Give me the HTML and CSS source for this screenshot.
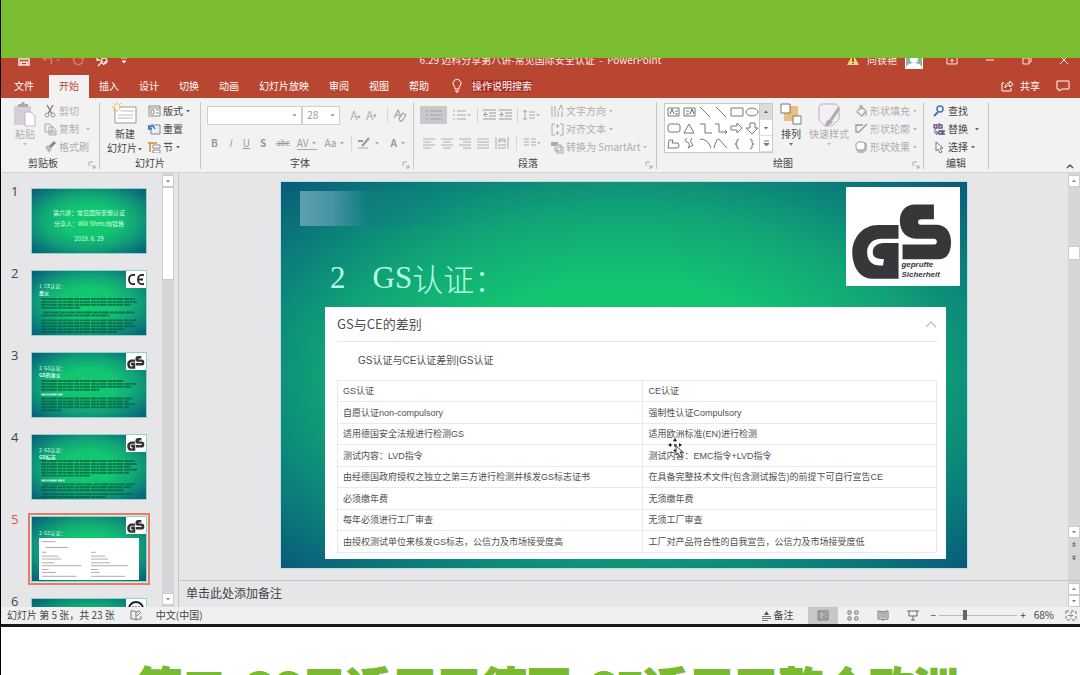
FILE: index.html
```html
<!DOCTYPE html>
<html lang="zh-CN">
<head>
<meta charset="utf-8">
<title>PowerPoint</title>
<link rel="stylesheet" href="styles.css">
</head>
<body>
<svg class="defs" aria-hidden="true">
  <symbol id="gs" viewBox="0 0 345 297">
    <g transform="translate(-317 -34)">
      <path d="M476 148H415C365 148 336 190 336 230C336 275 360 310 395 310H476V202H432C410 202 398 214 398 230C398 244 408 251 432 251L429 270H420C395 270 381 255 381 230C381 205 398 189 425 189H476Z"/>
      <path d="M583 86H525C498 86 480 105 480 135C480 168 500 189 528 189H582C590 189 592 194 592 198C592 203 590 207 584 207H488V251H600C622 251 635 232 635 200C635 168 618 147 590 147H545C538 147 535 143 535 139C535 133 538 130 546 130H583Z"/>
    </g>
  </symbol>
  <symbol id="down" viewBox="0 0 6 6"><path d="M1 2h4L3 4.500z"/></symbol>
  <symbol id="up" viewBox="0 0 6 6"><path d="M1 4h4L3 1.500z"/></symbol>
  <symbol id="launch" viewBox="0 0 8 8"><path d="M1 5V1h4M4 4l3 3M7 4v3H4" fill="none" stroke="currentColor"/></symbol>
  <symbol id="lines" viewBox="0 0 12 12"><path d="M0 2h12M0 5h8M0 8h12M0 11h8" fill="none" stroke="currentColor"/></symbol>
  <symbol id="linesc" viewBox="0 0 12 12"><path d="M0 2h12M2 5h8M0 8h12M2 11h8" fill="none" stroke="currentColor"/></symbol>
  <symbol id="linesr" viewBox="0 0 12 12"><path d="M0 2h12M4 5h8M0 8h12M4 11h8" fill="none" stroke="currentColor"/></symbol>
  <symbol id="linesj" viewBox="0 0 12 12"><path d="M0 2h12M0 5h12M0 8h12M0 11h12" fill="none" stroke="currentColor"/></symbol>
</svg>

<div class="page">
<div class="band"></div>
<div class="app">
  <header class="titlebar">
    <div class="quick">
      <svg width="12" height="12" viewBox="0 0 12 12"><path d="M1 1h10v10H1zM3 1v4h6V1M3 11V8h6v3" fill="none" stroke="currentColor" stroke-width="1.500"/></svg>
      <svg class="faded" width="20" height="12" viewBox="0 0 20 12"><path d="M5 1L2 4l3 3M2 4h6q4 1 2 6" fill="none" stroke="currentColor" stroke-width="1.500"/><path d="M15 5h4l-2 2z" fill="currentColor"/></svg>
      <svg class="faded" width="12" height="12" viewBox="0 0 12 12"><path d="M8 2a4.500 4.500 0 1 1-5 1M8 0v4h4" fill="none" stroke="currentColor" stroke-width="1.500"/></svg>
      <svg width="14" height="14" viewBox="0 0 14 14"><path d="M1 2h9v4M2 2v5h3M9 5a3 3 0 1 0 .1 0M8 8l-5 5M11 8l-3 4" fill="none" stroke="currentColor" stroke-width="1.300"/></svg>
      <svg width="8" height="10" viewBox="0 0 8 10"><path d="M1 3h6M2 6h4l-2 2z" fill="currentColor" stroke="currentColor"/></svg>
    </div>
    <div class="doc">6.29 迈科分享第八讲-常见国际安全认证 &nbsp;-&nbsp; PowerPoint</div>
    <div class="window">
      <svg width="12" height="12" viewBox="0 0 12 12"><path d="M6 0l6 11H0z" fill="#f6d27a"/><path d="M6 4v4M6 9v1" stroke="#79341e" stroke-width="1.500"/></svg>
      <span class="user">向镁艳</span>
      <svg class="avatar" width="18" height="18" viewBox="0 0 18 18"><path d="M0 0h18v18H0z" fill="#8eb59b"/><path d="M2 18V1h14v17z" fill="#8eb59b"/><circle cx="9" cy="8" r="4" fill="#fff"/><path d="M1 18q0-6 8-6t8 6z" fill="#fff"/><path d="M.5.500h17v17H.500z" fill="none" stroke="#fff"/></svg>
      <svg width="12" height="12" viewBox="0 0 12 12"><path d="M1 1h10v9H1zM1 3h10M6 9V5M4 7l2-2 2 2" fill="none" stroke="currentColor"/></svg>
      <svg width="10" height="12" viewBox="0 0 10 12"><path d="M1 6h8" stroke="currentColor"/></svg>
      <svg width="10" height="12" viewBox="0 0 10 12"><path d="M1 4h6v6H1zM3 4V2h6v6H7" fill="none" stroke="currentColor"/></svg>
      <svg width="10" height="12" viewBox="0 0 10 12"><path d="M1 2l8 8M9 2l-8 8" stroke="currentColor"/></svg>
    </div>
  </header>

  <nav class="tabs">
    <button class="tab file">文件</button><button class="tab active">开始</button><button class="tab">插入</button><button class="tab">设计</button><button class="tab">切换</button><button class="tab">动画</button><button class="tab">幻灯片放映</button><button class="tab">审阅</button><button class="tab">视图</button><button class="tab">帮助</button>
    <svg class="bulb" width="12" height="14" viewBox="0 0 12 14"><path d="M4 10Q4 8 3 7a4 4 0 1 1 6 0Q8 8 8 10zM4 12h4M5 13h2" fill="none" stroke="currentColor"/></svg>
    <button class="tellme">操作说明搜索</button>
    <span class="grow"></span>
    <button class="share"><svg width="13" height="12" viewBox="0 0 13 12"><path d="M3 3H1v8h9V8M4 8q0-5 5-5V1l3 3.500L9 7V5Q6 5 4 8z" fill="none" stroke="currentColor"/></svg>共享</button>
    <button class="comment" aria-label="批注"><svg width="14" height="12" viewBox="0 0 14 12"><path d="M1 1h12v8H6l-3 2V9H1z" fill="none" stroke="currentColor"/></svg></button>
  </nav>

  <section class="ribbon">
    <div class="group clipboard">
      <div class="tools off">
        <button class="big"><svg width="24" height="26" viewBox="0 0 24 26"><path d="M1 4h17v19H1z" fill="#d5ced8"/><path d="M5 5V2h3l1-2h2l1 2h3v3z" fill="#aaa"/><path d="M12 10h6l4 4v10H12z" fill="#fff" stroke="#bbb"/></svg>粘贴<svg class="caret"><use href="#down"/></svg></button>
        <div class="stack">
          <button><svg width="13" height="13" viewBox="0 0 13 13"><path d="M3 0l5 9M9 0L4 9" stroke="#888" stroke-width="1.500"/><circle cx="3" cy="10" r="2" fill="none" stroke="#999"/><circle cx="9" cy="10" r="2" fill="none" stroke="#999"/></svg>剪切</button>
          <button><svg width="13" height="13" viewBox="0 0 13 13"><path d="M1 1h5l2 2v6H1zM5 4h4l3 3v5H5zM6 8h5M6 10h5" fill="#eee" stroke="#aaa"/></svg>复制<svg class="caret far"><use href="#down"/></svg></button>
          <button><svg width="13" height="13" viewBox="0 0 13 13"><path d="M1 6l3-2 4 4-3 4z" fill="#bbb"/><path d="M6 6l5-5" stroke="#888" stroke-width="3"/></svg>格式刷</button>
        </div>
      </div>
      <div class="name">剪贴板<svg class="launch"><use href="#launch"/></svg></div>
    </div>
    <div class="group slides">
      <div class="tools">
        <button class="big"><svg width="26" height="26" viewBox="0 0 26 26"><path d="M3 5h21v16H3z" fill="#fff" stroke="#999"/><path d="M10 9h12M6 13h15M6 16h15" stroke="#bbb"/><path d="M5 0v10M0 5h10M1 1l8 8M9 1l-8 8" stroke="#e8b85c"/><circle cx="5" cy="5" r="2" fill="#fff"/></svg>新建<span>幻灯片<svg class="caret"><use href="#down"/></svg></span></button>
        <div class="stack">
          <button><svg width="13" height="12" viewBox="0 0 13 12"><path d="M1 1h11v10H1zM1 3h11M3 5h3v4H3zM8 5h3M8 8h3" fill="#fff" stroke="#888"/></svg>版式<svg class="caret"><use href="#down"/></svg></button>
          <button><svg width="13" height="12" viewBox="0 0 13 12"><path d="M3 2h9v9H3z" fill="#e8eef5" stroke="#888"/><path d="M1 2l-1 4h4M1 5q3-5 6 1" fill="none" stroke="#2d74bb" stroke-width="1.300"/></svg>重置</button>
          <button><svg width="13" height="12" viewBox="0 0 13 12"><path d="M5 4h7v3H5zM5 9h7v3H5z" fill="#fff" stroke="#888"/><path d="M0 2h9M2 2v9" stroke="#dfa454" stroke-width="2"/></svg>节<svg class="caret"><use href="#down"/></svg></button>
        </div>
      </div>
      <div class="name">幻灯片</div>
    </div>
    <div class="group font">
      <div class="tools rows off">
        <div class="line">
          <select class="box face" aria-label="字体"><option></option></select><select class="box size" aria-label="字号"><option>28</option></select>
          <button class="grow-a">A<sup>▴</sup></button><button class="shrink-a">A<sup>▾</sup></button><i class="rule"></i>
          <button aria-label="清除格式"><svg width="14" height="13" viewBox="0 0 14 13"><path d="M1 9l4-8 3 7M2 6h4M6 9l4-5 3 2-4 6H7z" fill="none" stroke="#aaa" stroke-width="1.300"/></svg></button>
        </div>
        <div class="line letters">
          <button><b>B</b></button><button><em>I</em></button><button><u>U</u></button><button><b>S</b></button><button class="tiny"><s>abc</s></button><button class="av">AV<svg class="caret"><use href="#down"/></svg></button><button>Aa<svg class="caret"><use href="#down"/></svg></button><i class="rule"></i><button aria-label="突出显示"><svg width="14" height="13" viewBox="0 0 14 13"><path d="M1 4h5M5 9l7-8" stroke="#999" stroke-width="2"/><path d="M1 11h10" stroke="#ccc" stroke-width="2"/></svg><svg class="caret"><use href="#down"/></svg></button><button><b>A</b><svg class="caret"><use href="#down"/></svg></button>
        </div>
      </div>
      <div class="name">字体<svg class="launch"><use href="#launch"/></svg></div>
    </div>
    <div class="group para">
      <div class="tools off">
        <div class="rows">
          <div class="line">
            <button class="pressed" aria-label="项目符号"><svg width="18" height="12" viewBox="0 0 18 12"><path d="M1 2h2M5 2h12M1 6h2M5 6h12M1 10h2M5 10h12" stroke="#a2a2a6"/></svg></button>
            <button aria-label="编号"><svg width="13" height="13" viewBox="0 0 13 13"><path d="M0 2h2M4 2h9M0 6h2M4 6h9M0 10h2M4 10h9" stroke="#aaa"/></svg><svg class="caret"><use href="#down"/></svg></button><i class="rule"></i>
            <button aria-label="减少缩进"><svg width="13" height="12" viewBox="0 0 13 12"><path d="M0 1h13M6 4h7M6 7h7M0 10h13M5 5.500H1M3 3L1 5.500 3 8" fill="none" stroke="#999"/></svg></button>
            <button aria-label="增加缩进"><svg width="13" height="12" viewBox="0 0 13 12"><path d="M0 1h13M6 4h7M6 7h7M0 10h13M0 5.500h4M2 3l2 2.500L2 8" fill="none" stroke="#999"/></svg></button><i class="rule"></i>
            <button aria-label="行距"><svg width="12" height="12" viewBox="0 0 12 12"><path d="M2 1v10M0 3l2-2 2 2M0 9l2 2 2-2M6 3h6M6 6h6M6 9h6" fill="none" stroke="#aaa"/></svg><svg class="caret"><use href="#down"/></svg></button>
          </div>
          <div class="line aligns">
            <button aria-label="左对齐"><svg width="12" height="12"><use href="#lines"/></svg></button><button aria-label="居中"><svg width="12" height="12"><use href="#linesc"/></svg></button><button aria-label="右对齐"><svg width="12" height="12"><use href="#linesr"/></svg></button><button aria-label="两端对齐"><svg width="12" height="12"><use href="#linesj"/></svg></button><button aria-label="分散对齐"><svg width="14" height="13" viewBox="0 0 14 13"><path d="M1 0v12M13 0v12M3 8h8M3 11h8M4 6V2h6v4M4 4h6" fill="none" stroke="#aaa"/></svg></button><i class="rule"></i><button aria-label="分栏"><svg width="12" height="12" viewBox="0 0 12 12"><path d="M0 2h5M7 2h5M0 5h5M7 5h5M0 8h5M7 8h5" stroke="#aaa"/></svg><svg class="caret"><use href="#down"/></svg></button>
          </div>
        </div>
        <div class="stack">
          <button><svg width="13" height="13" viewBox="0 0 13 13"><path d="M1 1v11M4 1v11M7 6v6M8 5l2-5 2 5M11 6v6" fill="none" stroke="#aaa"/></svg>文字方向<svg class="caret"><use href="#down"/></svg></button>
          <button><svg width="13" height="13" viewBox="0 0 13 13"><path d="M4 1H1v11h3M9 1h3v11H9M6.500 2v3M5 3.500l1.500-2 1.500 2M6.500 8v3M5 9.500l1.500 2 1.500-2" fill="none" stroke="#aaa"/></svg>对齐文本<svg class="caret"><use href="#down"/></svg></button>
          <button><svg width="13" height="13" viewBox="0 0 13 13"><path d="M0 1h7v4H0z" fill="#aaa"/><path d="M4 4h6v6H4zM6 6h6v6H6z" fill="#eee" stroke="#aaa"/></svg>转换为 SmartArt<svg class="caret"><use href="#down"/></svg></button>
        </div>
      </div>
      <div class="name">段落<svg class="launch"><use href="#launch"/></svg></div>
    </div>
    <div class="group draw">
      <div class="tools">
        <div class="gallery">
          <svg width="94" height="48" viewBox="0 0 94 48" fill="none" stroke="#777">
            <path d="M3 4h11v8H3zM19 4h11v8H19z"/><path d="M5 10l2-5 2 5M25 10l2-5 2 5" stroke="#456a94"/><path d="M10 7h3M10 10h3M21 7h3M21 10h3M35 3l10 10M51 3l10 10M66 4h12v8H66z"/><ellipse cx="87" cy="8" rx="6" ry="4"/>
            <rect x="3" y="20" width="12" height="8" rx="2"/><path d="M19 29l5-9 5 9zM35 20h5v9h7M50 20h4v8h8M60 26l2 2-2 2M66 22h6v-3l5 5-5 5v-3h-6zM85 19h5v5h3l-6 6-6-6h4z"/>
            <path d="M4 36h4l-1 3h6q3 5-2 5H3zM22 34q-4 3 0 4t1 6l5-3q-4-4-1-7M35 35q8 0 11 9M49 44q3-12 6-8t7 8M74 35q-3 0-2 4l-2 1 2 1q-1 4 2 4M85 35q3 0 2 4l2 1-2 1q1 4-2 4"/>
          </svg>
          <div class="steps"><button aria-label="上一行"><svg class="caret"><use href="#up"/></svg></button><button aria-label="下一行"><svg class="caret"><use href="#down"/></svg></button><button aria-label="更多形状"><svg width="7" height="8" viewBox="0 0 7 8"><path d="M1 1h5M1 3.500h5L3.500 6z" stroke="#777" fill="#777"/></svg></button></div>
        </div>
        <button class="big"><svg width="24" height="26" viewBox="0 0 24 26"><path d="M5 4h14v15H5z" fill="#e8bd80"/><path d="M2 2h9v9H2zM14 14h8v8h-8z" fill="#fff" stroke="#777"/></svg>排列<svg class="caret"><use href="#down"/></svg></button>
        <button class="big off"><svg width="24" height="26" viewBox="0 0 24 26"><path d="M4 2h15l3 3v12l-7 7H8l-6-6V5z" fill="#f4eff6" stroke="#b9b0bb"/><path d="M22 6l-8 12" stroke="#aaa" stroke-width="3"/><path d="M8 24q0-5 5-7l3 3q-3 4-8 4z" fill="#b4a8b8"/></svg>快速样式<svg class="caret"><use href="#down"/></svg></button>
        <div class="stack off">
          <button><svg width="13" height="13" viewBox="0 0 13 13"><path d="M3 5l4-3 4 4-4 5-5-4zM5 5V1h2v3M11 6v5" fill="none" stroke="#aaa" stroke-width="1.300"/></svg>形状填充<svg class="caret"><use href="#down"/></svg></button>
          <button><svg width="13" height="13" viewBox="0 0 13 13"><path d="M8 2H1v7h3M4 9l8-8" fill="none" stroke="#999" stroke-width="1.300"/></svg>形状轮廓<svg class="caret"><use href="#down"/></svg></button>
          <button><svg width="13" height="13" viewBox="0 0 13 13"><path d="M3 1h7l2 2v6l-3 3H3L1 9z" fill="#bbb"/><path d="M3 1h5l2 2v4L8 9H3L1 7V3z" fill="#fff" stroke="#999"/></svg>形状效果<svg class="caret"><use href="#down"/></svg></button>
        </div>
      </div>
      <div class="name">绘图<svg class="launch"><use href="#launch"/></svg></div>
    </div>
    <div class="group edit">
      <div class="tools">
        <div class="stack">
          <button><svg width="13" height="13" viewBox="0 0 13 13"><circle cx="7" cy="4" r="3" fill="none" stroke="#4077b5" stroke-width="1.500"/><path d="M5 7l-4 4" stroke="#4077b5" stroke-width="2"/></svg>查找</button>
          <button><svg width="13" height="13" viewBox="0 0 13 13"><path d="M1 5V2h3v3H1M6 0v5h3V2H6M6 8h3v3H6zM12 8h-2v3h2" fill="none" stroke="#5d5270" stroke-width="1.300"/><path d="M2 6v4h3M3 8l2 2-2 2" fill="none" stroke="#3a73b5"/></svg>替换<svg class="caret far"><use href="#down"/></svg></button>
          <button><svg width="13" height="13" viewBox="0 0 13 13"><path d="M3 1v9l2-2 2 4 2-1-2-4h3z" fill="#fff" stroke="#777"/></svg>选择<svg class="caret"><use href="#down"/></svg></button>
        </div>
      </div>
      <div class="name">编辑</div>
    </div>
    <button class="fold" aria-label="折叠功能区"><svg width="8" height="6" viewBox="0 0 8 6"><path d="M1 5l3-3 3 3" fill="none" stroke="#555" stroke-width="1.500"/></svg></button>
  </section>

  <main class="work">
    <aside class="pane">
      <ol class="thumbs">
        <li><span>1</span><div class="thumb cover"><p>第六讲：常见国际安规认证</p><p>分享人：Will Shen/向镁艳</p><p class="date">2019. 6. 29</p></div></li>
        <li><span>2</span><div class="thumb"><p>1 &nbsp;CE认证：</p><p class="sub">意义</p>
          <svg class="copy" viewBox="0 0 98 40"><path d="M0 3h96M0 6h98M0 9h92M0 12h40M2 17h94M0 20h70M0 25h98M0 28h94M0 31h96M0 34h86M0 37h78"/></svg>
          <svg class="badge" viewBox="0 0 20 15"><path d="M0 0h20v15H0z" fill="#fff"/><path d="M9 3Q3 2 3 7.500T9 12M18 3q-6-1-6 4.500T18 12M13 7.500h4" fill="none" stroke="#222" stroke-width="1.800"/></svg></div></li>
        <li><span>3</span><div class="thumb"><p>2 &nbsp;GS认证：</p><p class="sub">GS的含义</p>
          <svg class="copy" viewBox="0 0 98 40"><path d="M0 3h84M0 6h98M0 9h92M0 12h60M0 21h94M0 24h90M0 27h96M0 30h90M0 33h20"/><path class="pale" d="M0 17h22"/></svg>
          <svg class="badge" viewBox="0 0 345 297"><use href="#gs"/></svg></div></li>
        <li><span>4</span><div class="thumb"><p>2 &nbsp;GS认证：</p><p class="sub">GS标志</p>
          <svg class="copy" viewBox="0 0 98 40"><path d="M0 1h96M0 4h98M0 7h92M0 10h98M0 13h90M0 16h50M2 25h94M0 28h92M0 31h84M2 35h92M0 38h66"/><path class="pale" d="M0 21h24"/></svg>
          <svg class="badge" viewBox="0 0 345 297"><use href="#gs"/></svg></div></li>
        <li class="current"><span>5</span><div class="thumb"><p class="lone">2 &nbsp;GS认证：</p>
          <svg class="sheet" viewBox="0 0 104 42"><path d="M3 3h14M7 9h23M3 14h5M54 14h5M3 18h17M54 18h15M3 21h20M54 21h18M3 25h13M54 25h20M3 28h41M54 28h39M3 32h7M54 32h7M3 35h15M54 35h9M3 39h36M54 39h36"/></svg>
          <svg class="badge" viewBox="0 0 345 297"><use href="#gs"/></svg></div></li>
        <li><span>6</span><div class="thumb"><svg class="badge" viewBox="0 0 20 15"><path d="M0 0h20v15H0z" fill="#fff"/><circle cx="10" cy="9" r="7" fill="none" stroke="#222" stroke-width="2"/><path d="M7 6v6M10 6v6M13 6v6" stroke="#222"/></svg></div></li>
      </ol>
      <div class="scroll">
        <button aria-label="向上"><svg class="caret"><use href="#up"/></svg></button><div class="knob tall"></div><span class="grow"></span><button aria-label="向下"><svg class="caret"><use href="#down"/></svg></button>
      </div>
    </aside>
    <section class="stage">
      <div class="view">
        <div class="canvas">
          <article class="slide">
            <div class="smear"></div>
            <h1><span>2</span><span>GS</span>认证：</h1>
            <div class="logo"><svg viewBox="0 0 345 297"><use href="#gs"/><text x="168" y="241">geprufte</text><text x="168" y="270">Sicherheit</text></svg></div>
            <div class="card">
              <h2>GS与CE的差别<svg width="12" height="8" viewBox="0 0 12 8"><path d="M1 7l5-5 5 5" fill="none" stroke="#c4c4c4" stroke-width="1.500"/></svg></h2>
              <h3>GS认证与CE认证差别|GS认证</h3>
              <table>
                <tr><td>GS认证</td><td>CE认证</td></tr>
                <tr><td>自愿认证non-compulsory</td><td>强制性认证Compulsory</td></tr>
                <tr><td>适用德国安全法规进行检测GS</td><td>适用欧洲标准(EN)进行检测</td></tr>
                <tr><td>测试内容：LVD指令</td><td>测试内容：EMC指令+LVD指令</td></tr>
                <tr><td>由经德国政府授权之独立之第三方进行检测并核发GS标志证书</td><td>在具备完整技术文件(包含测试报告)的前提下可自行宣告CE</td></tr>
                <tr><td>必须缴年费</td><td>无须缴年费</td></tr>
                <tr><td>每年必须进行工厂审查</td><td>无须工厂审查</td></tr>
                <tr><td>由授权测试单位来核发GS标志，公信力及市场接受度高</td><td>工厂对产品符合性的自我宣告，公信力及市场接受度低</td></tr>
              </table>
              <svg class="cursor" width="18" height="20" viewBox="0 0 18 20"><path d="M7 1v12M1 7h12" stroke="#222" stroke-dasharray="3 2"/><path d="M7 0l2 3H5zM0 7l3-2v4zM14 7l-3-2v4zM7 14l2-2H5z" fill="#222"/><path d="M8 8v9l2-2 2 4 2-1-2-4h3z" fill="#fff" stroke="#444"/></svg>
            </div>
          </article>
        </div>
        <div class="scroll">
          <button aria-label="向上"><svg class="caret"><use href="#up"/></svg></button><span class="gap"></span><div class="knob"></div><span class="grow"></span><button aria-label="向下"><svg class="caret"><use href="#down"/></svg></button>
          <button class="bare" aria-label="上一张"><svg width="6" height="7" viewBox="0 0 8 9"><path d="M1 4l3-3 3 3zM1 7l3-3 3 3zM1 8h6" fill="#777"/></svg></button>
          <button class="bare" aria-label="下一张"><svg width="6" height="7" viewBox="0 0 8 9"><path d="M1 2l3 3 3-3zM1 5l3 3 3-3zM1 1h6" fill="#777"/></svg></button>
        </div>
      </div>
      <div class="notes"><p>单击此处添加备注</p><div class="scroll"><button aria-label="向上"><svg class="caret"><use href="#up"/></svg></button><span class="grow"></span><button aria-label="向下"><svg class="caret"><use href="#down"/></svg></button></div></div>
    </section>
  </main>

  <footer class="status">
    <span>幻灯片 第 5 张，共 23 张</span>
    <svg class="proof" width="12" height="11" viewBox="0 0 12 11"><path d="M6 2Q3 0 1 1v8q2-1 5 1V2q2-1 4-1M6 10q2-1 5-1V6M7 6l4-4" fill="none" stroke="#777"/></svg>
    <span>中文(中国)</span>
    <span class="grow"></span>
    <button class="memo"><svg width="11" height="11" viewBox="0 0 11 11"><path d="M1 6.500h9M1 8.500h9M1 10.500h6" stroke="#777"/><path d="M3 5h5L5.500 1z" fill="#555"/></svg>备注</button>
    <div class="modes">
      <button class="on" aria-label="普通"><svg width="12" height="11" viewBox="0 0 12 11"><path d="M1 1h10v9H1zM3 1v9M5 3h4v3H5M5 8h6" fill="none" stroke="#777"/></svg></button>
      <button aria-label="浏览"><svg width="12" height="11" viewBox="0 0 12 11"><path d="M1 1h3v3H1zM8 1h3v3H8zM1 7h3v3H1zM8 7h3v3H8z" fill="none" stroke="#777"/></svg></button>
      <button aria-label="阅读"><svg width="12" height="11" viewBox="0 0 12 11"><path d="M6 2Q4 1 1 1v8q3 0 5 1 2-1 5-1V1Q8 1 6 2v8M2 3h3M2 5h3M2 7h3M7 3h3M7 5h3M7 7h3" fill="none" stroke="#777"/></svg></button>
      <button aria-label="放映"><svg width="12" height="11" viewBox="0 0 12 11"><path d="M0 1h12M2 1v5h8V1M6 6v4M4 10h4" fill="none" stroke="#666"/></svg></button>
    </div>
    <button aria-label="缩小">−</button><input type="range" min="0" max="100" value="32" aria-label="缩放"><button aria-label="放大">+</button>
    <span class="zoom">68%</span>
    <button aria-label="适应窗口"><svg width="12" height="11" viewBox="0 0 12 11"><path d="M1 1h10v9H1z" fill="none" stroke="#777" stroke-dasharray="3 2"/><path d="M6 2v7M3 5.500h6" stroke="#777" stroke-dasharray="2 1"/></svg></button>
  </footer>
</div>
<div class="caption">第二.GS只适用于德国,CE适用于整个欧洲</div>
</div>
</body>
</html>
```
FILE: styles.css
```css
* { box-sizing: border-box; }
body { margin: 0; font: 10px/14px "Noto Sans CJK SC", sans-serif; color: #444; background: #fff; }
button { margin: 0; padding: 0; border: 0; background: none; font: inherit; color: inherit; display: flex; align-items: center; white-space: nowrap; }
h1, h2, h3, p, ol { margin: 0; padding: 0; font-weight: 400; }
svg { flex: none; }
.defs { position: absolute; width: 0; height: 0; }
.grow { flex: 1; }
.caret { width: 6px; height: 6px; fill: currentColor; opacity: .8; }
.page { height: 100vh; overflow: hidden; display: flex; flex-direction: column; border-left: 1px solid #000; }
.band { flex: none; height: 58px; background: #7abd31; }
.app { flex: none; border-bottom: 3px solid #1b1719; }

.titlebar { height: 15px; overflow: hidden; background: #b94630; color: #fbe9e4; display: grid; grid-template-columns: 1fr auto 1fr; }
.titlebar > * { height: 20px; margin-top: -8px; display: flex; align-items: center; }
.quick { gap: 11px; padding-left: 17px; }
.faded { opacity: .35; }
.doc { white-space: pre; }
.window { justify-content: flex-end; gap: 27px; padding-right: 11px; }
.user { margin-left: -19px; }
.avatar { margin: 0 -4px 0 -19px; }

.tabs { height: 25px; background: #b94630; color: #fff; display: flex; align-items: stretch; padding: 0 10px 0 3px; }
.tab { padding: 0 10px; }
.file { margin-right: 5px; }
.active { background: #f3f2f3; color: #b94630; margin-top: 2px; padding-bottom: 2px; }
.bulb { align-self: center; margin: 0 9px 0 12px; }
.tellme { align-self: center; background: #a62c24; height: 12px; }
.share { gap: 6px; margin-right: 16px; }

.ribbon { height: 75px; background: #f3f2f3; border-bottom: 1px solid #d4d3d5; display: flex; position: relative; }
.group { border-right: 1px solid #c8c7c9; margin: 4px 0 3px; display: flex; flex-direction: column; }
.tools { display: flex; height: 55px; }
.name { flex: none; text-align: center; position: relative; line-height: 12px; }
.launch { position: absolute; right: 3px; bottom: 0; width: 8px; height: 8px; color: #aaa; }
.off, .off button { color: #adadb0; }
.big { flex-direction: column; line-height: 14px; justify-content: flex-start; }
.big > svg:first-child { margin-bottom: -1px; }
.stack { display: flex; flex-direction: column; }
.stack button { height: 18px; gap: 2px; }
.stack .far { margin-left: 4px; }
.clipboard { width: 99px; }
.clipboard .tools { padding-left: 12px; gap: 7px; }
.clipboard .name { padding-right: 14px; }
.slides { width: 101px; }
.slides .tools { padding-left: 7px; gap: 5px; }
.font { width: 213px; }
.font .name { padding-right: 14px; }
.draw .name { padding-right: 14px; }
.para .name { padding-right: 14px; }
.rows { display: flex; flex-direction: column; gap: 4px; }
.line { display: flex; align-items: center; height: 24px; }
.font .tools { padding: 1px 6px 0; }
.box { appearance: none; border: 1px solid #cfcfd1; border-radius: 0; height: 19px; margin: 0; padding: 0 4px; font: inherit; color: #999; background: linear-gradient(#aaa, #aaa) no-repeat right 5px center / 3px 2px #fff; }
.face { width: 101px; }
.size { width: 40px; margin-right: 10px; }
.font .line sup { font-size: 7px; line-height: 7px; }
.grow-a, .shrink-a { width: 17px; font-size: 12px; }
.rule { width: 1px; height: 16px; background: #d6d6d8; margin: 0 5px; flex: none; }
.letters { gap: 11px; padding-left: 4px; color: #999; }
.letters button { color: #999; gap: 3px; }
.letters .rule { margin: 0 -5px; }
.letters button:nth-child(n+4) { margin-left: -1px; }
.tiny { font-size: 8px; }
.av { border-bottom: 1px solid #aaa; line-height: 12px; }
.letters .av, .letters .tiny { margin: 0 -3px; }
.para { width: 243px; }
.para .tools { padding-left: 6px; gap: 4px; }
.para .rows { padding-top: 1px; width: 127px; }
.pressed { background: #c9c8cb; width: 27px; height: 18px; justify-content: center; margin-right: 3px; }
.para .line button + button { margin-left: 3px; }
.para .rule { margin: 0 5px; }
.para .line .rule + button { margin-left: 0; }
.aligns { padding-left: 3px; }
.para .aligns button + button { margin-left: 6px; }
.para .aligns .rule { margin: 0 7px; }
.draw { width: 267px; }
.draw .tools { padding-left: 7px; gap: 6px; }
.gallery { display: flex; border: 1px solid #c9c9cb; background: #fff; height: 50px; margin-top: 1px; }
.steps { display: flex; flex-direction: column; width: 13px; border-left: 1px solid #c9c9cb; }
.steps button { flex: 1; justify-content: center; border-bottom: 1px solid #ddd; }
.steps button:first-child { background: #dcdbdd; }
.edit { width: 65px; }
.edit .tools { padding-left: 9px; }
.fold { position: absolute; right: 6px; bottom: 3px; }

.work { display: flex; background: #e6e5e7; }
.pane { width: 178px; contain: size; overflow: hidden; display: flex; border-right: 1px solid #c6c5c7; }
.thumbs { list-style: none; flex: 1; min-width: 0; padding: 15px 15px 0 10px; display: flex; flex-direction: column; gap: 16px; }
.thumbs li { display: flex; gap: 12px; font: 13px/14px "Open Sans", sans-serif; }
.thumbs li > span { width: 8px; flex: none; margin-top: -4px; }
.thumb { flex: 1; min-width: 0; aspect-ratio: 116 / 66; border: 1px solid #8fd3c6; position: relative; color: #d9ffec; padding: 11px 7px 0; font: 5px/8px "Noto Sans CJK SC", sans-serif; white-space: nowrap; overflow: hidden; }
.thumb, .slide { background: radial-gradient(ellipse farthest-corner at 50% 50%, #10cd6b 0%, #13c471 35%, #11a477 60%, #0b7f7a 80%, #0a5a7a 100%); }
.cover { padding: 18px 0 0; text-align: center; font-size: 6px; line-height: 11px; font-weight: 700; }
.cover .date { margin-top: 4px; }
.thumb .sub { font-weight: 700; line-height: 6px; }
.thumb .lone { line-height: 10px; }
.copy { display: block; width: 100%; height: 39px; fill: none; stroke: #075c42; stroke-width: 2; stroke-dasharray: 5 .5 3 .5 7 1; opacity: .75; }
.copy .pale { stroke: #c9ffe4; }
.badge { position: absolute; top: 0; right: 0; width: 20px; height: 17px; background: #fff; fill: #333; }
.sheet { display: block; width: 100%; height: 42px; background: #fff; stroke: #aaa; }
.current { color: #d0604a; }
.current .thumb { outline: 2px solid #e07f68; outline-offset: 1px; }
.scroll { width: 12px; flex: none; display: flex; flex-direction: column; background: #d8d5d9; }
.scroll button { height: 12px; background: #fff; border: 1px solid #ccc; justify-content: center; color: #666; }
.scroll .bare { border: 0; background: none; height: 13px; }
.pane .scroll { margin-right: 4px; padding: 2px 0; }
.knob { height: 14px; background: #fff; border: 1px solid #ccc; }
.tall { height: 93px; }
.gap { height: 59px; }
.stage { flex: 1; padding-left: 1px; display: flex; flex-direction: column; }
.view { display: flex; }
.canvas { flex: 1; padding: 9px 0 12px; display: flex; justify-content: center; align-items: flex-start; }
.view .scroll { padding: 2px 0 16px; }
.slide { width: 77.25%; aspect-ratio: 686 / 386; position: relative; display: flex; flex-direction: column; padding: 0 21px 9px 44px; outline: 1px solid #b8e2dc; }
.smear { position: absolute; left: 19px; top: 9px; width: 160px; height: 35px; background: linear-gradient(90deg, #5f9faf, #4593a4 20%, #11808180 42%, #0c7e8200); }
.slide h1 { flex: none; height: 125px; padding: 74px 0 0 5px; font-size: 31px; line-height: 44px; font-weight: 300; color: #b5ffe0; display: flex; }
.slide h1 span { font-family: "Liberation Serif", serif; }
.slide h1 span + span { margin-left: 27px; }
.logo { position: absolute; right: 7px; top: 5px; width: 114px; height: 99px; background: #fff; }
.logo svg { display: block; width: 100%; height: 100%; fill: #393639; }
.logo text { font: italic bold 24px "Liberation Sans", sans-serif; }
.card { flex: 1; background: #fff; padding: 0 9px 6px 12px; position: relative; color: #505050; display: flex; flex-direction: column; }
.card h2 { font-size: 13px; line-height: 34px; border-bottom: 1px solid #e5e5e5; display: flex; justify-content: space-between; align-items: center; }
.card h3 { font: 10px/38px "Liberation Sans", "Noto Sans CJK SC", sans-serif; padding-left: 21px; }
.card table { flex: 1; width: 100%; height: 174px; border-collapse: collapse; font: 9px/14px "Liberation Sans", "Noto Sans CJK SC", sans-serif; }
.card td { border: 1px solid #ece9ec; padding: 0 5px; white-space: nowrap; width: 49%; }
.card td:first-child { width: 51%; }
.cursor { position: absolute; left: 343px; top: 131px; }
.notes { border-top: 1px solid #c4c3c5; height: 27px; display: flex; justify-content: space-between; font-size: 12px; line-height: 24px; padding-left: 6px; }
.notes .scroll { padding-top: 2px; }

.status { height: 17px; background: #f1f0f1; display: flex; align-items: center; padding: 0 3px 0 6px; white-space: nowrap; }
.proof { margin: 0 14px 0 15px; }
.memo { gap: 2px; margin-right: 14px; }
.modes { display: flex; align-self: stretch; margin-right: 3px; }
.modes button { width: 30px; justify-content: center; }
.modes .on { background: #c7c6c8; }
.status input { appearance: none; width: 78px; height: 12px; margin: 0 3px; background: linear-gradient(#bbb, #bbb) no-repeat center / 100% 1px; }
.status input::-webkit-slider-thumb { appearance: none; width: 4px; height: 10px; background: #666; }
.zoom { margin: 0 11px 0 8px; }

.caption { flex: 1; min-height: 0; overflow: hidden; padding: 37px 0 0 14px; text-align: center; white-space: nowrap; font: 700 45px/45px "Noto Sans CJK SC", sans-serif; color: #7aba32; -webkit-text-stroke: 2px #7aba32; paint-order: stroke; }
```
